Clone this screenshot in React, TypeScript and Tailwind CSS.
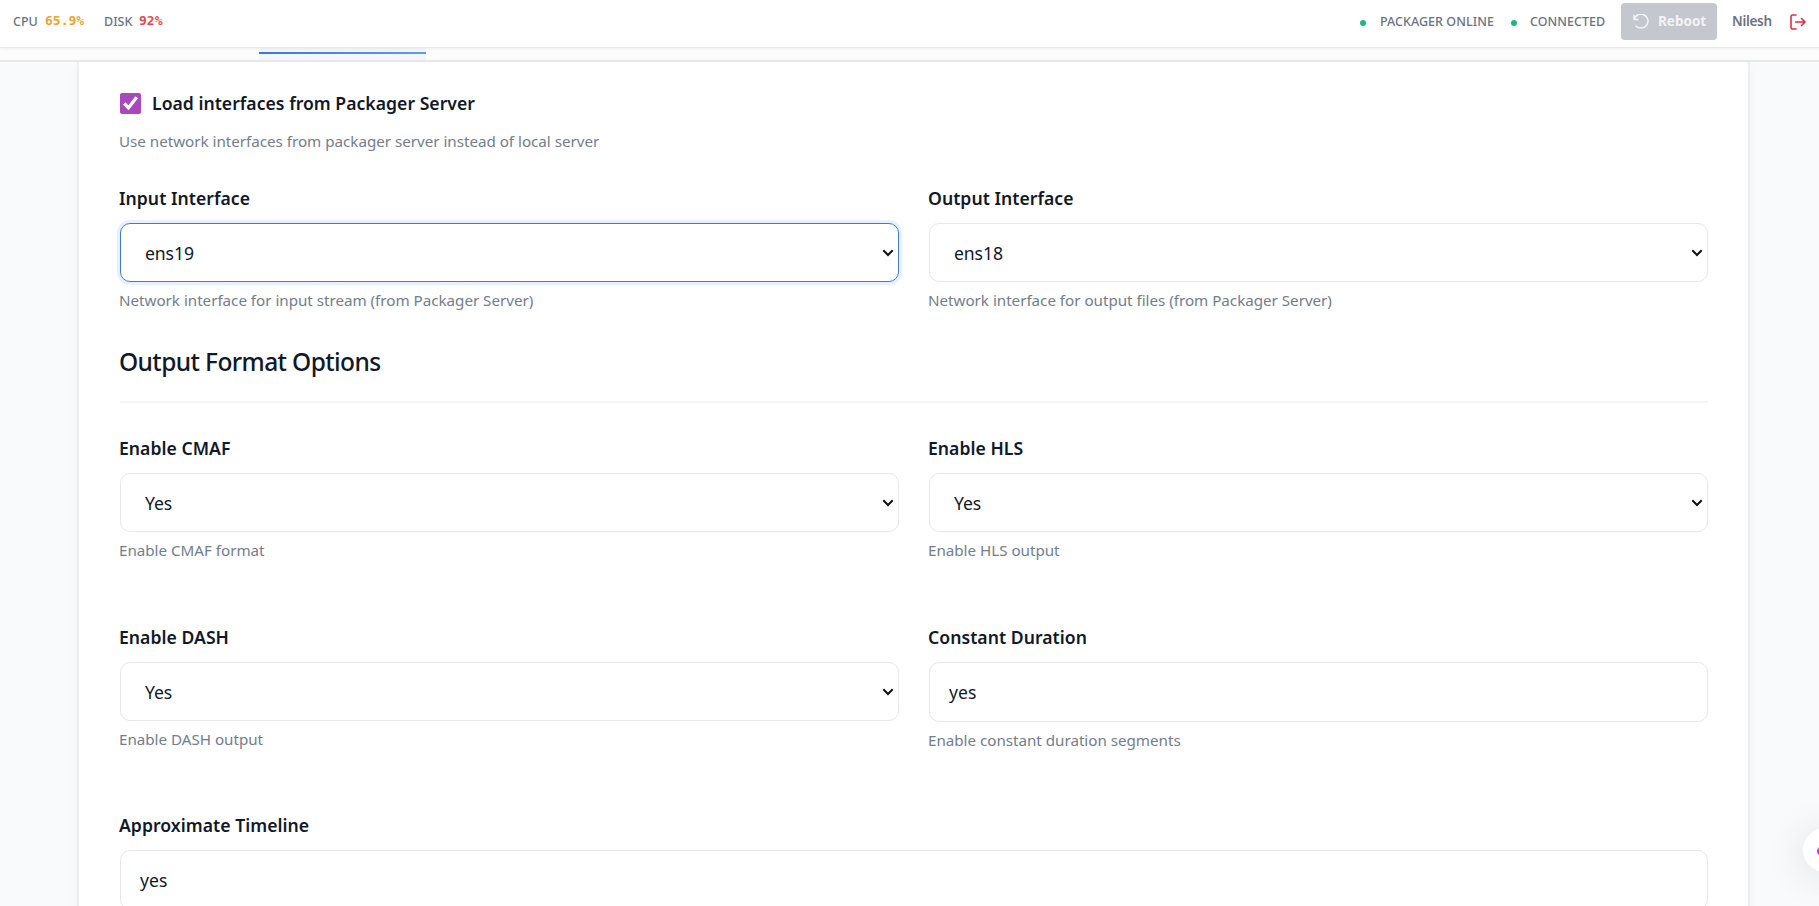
import { ReactNode } from 'react'

type FieldProps = {
  label: string
  help?: string
  children: ReactNode
}

function Field({ label, help, children }: FieldProps) {
  return (
    <div className="flex flex-col">
      <label className="-ml-px mb-[13px] self-start whitespace-nowrap text-[17.6px] font-semibold leading-6 tracking-[0.04px] text-[#111827]">
        {label}
      </label>
      {children}
      {help && <Help className="mt-[7px]">{help}</Help>}
    </div>
  )
}

function Help({ className = '', children }: { className?: string; children: ReactNode }) {
  return (
    <p className={`${className} -ml-px self-start whitespace-nowrap text-[15.2px] leading-[22px] tracking-[-0.02px] text-[#737d8c]`}>
      {children}
    </p>
  )
}

function Select({ value, focused = false }: { value: string; focused?: boolean }) {
  return (
    <div className="relative">
      <select
        defaultValue={value}
        className={
          focused
            ? 'block h-[59px] w-full appearance-none rounded-[10px] border border-[#3b7dd0] bg-white px-6 pt-px text-[17.6px] tracking-[-0.1px] text-[#111827] shadow-[0_0_0_3px_rgba(59,130,246,0.12)] outline-none'
            : 'block h-[59px] w-full appearance-none rounded-[10px] border border-[#e5e7eb] bg-white px-6 pt-px text-[17.6px] tracking-[-0.1px] text-[#111827] outline-none'
        }
      >
        <option>{value}</option>
      </select>
      <svg className="pointer-events-none absolute right-[5px] top-[26px]" width="12" height="8" viewBox="0 0 12 8">
        <path d="M1.3 1.3 6 6l4.7-4.7" fill="none" stroke="#111" strokeWidth="2" />
      </svg>
    </div>
  )
}

function TextInput({ value }: { value: string }) {
  return (
    <input
      type="text"
      defaultValue={value}
      className="block h-[60px] w-full rounded-[10px] border border-[#e5e7eb] bg-white px-[19px] text-[17.6px] text-[#111827] outline-none"
    />
  )
}

function Header() {
  return (
    <header className="relative flex h-12 shrink-0 items-start justify-between border-b border-[#e5e7eb] bg-white pl-[13px] pr-[13px] shadow-[0_1px_3px_rgba(0,0,0,0.06)]">
      <div className="mt-[13px] flex h-[18px] items-center text-[12.5px] font-medium leading-[18px] text-[#6b7280]">
        <span className="w-8">CPU</span>
        <span className="-mt-0.5 w-[59px] font-['DejaVu_Sans_Mono',monospace] text-[13px] font-bold text-[#eba42c]">65.9%</span>
        <span className="w-[35px]">DISK</span>
        <span className="-mt-0.5 font-['DejaVu_Sans_Mono',monospace] text-[13px] font-bold text-[#e5484d]">92%</span>
      </div>
      <div className="mt-[3px] flex h-[37px] items-center text-[12.5px] font-medium text-[#6b7280]">
        <span className="mr-[14px] mt-0.5 size-1.5 rounded-full bg-[#1fb583]" />
        <span className="w-[131px] whitespace-nowrap pt-px tracking-[0.05px]">PACKAGER ONLINE</span>
        <span className="mr-[13px] mt-0.5 size-1.5 rounded-full bg-[#1fb583]" />
        <span className="w-[91px] whitespace-nowrap pt-px tracking-[0.02px]">CONNECTED</span>
        <button type="button" className="mr-[15px] flex h-[37px] w-24 items-center gap-2 rounded bg-[#c4c7ce] pl-3 text-[13.5px] font-bold text-[#f3f4f6]">
          <svg width="17" height="16" viewBox="0 0 17 16" fill="none" stroke="currentColor" strokeWidth="1.5" strokeLinecap="round" strokeLinejoin="round">
            <path d="M1 1.500v4h4M1.200 5.300A7 7 0 1 1 3 12" />
          </svg>
          Reboot
        </button>
        <span className="w-[58px] text-[13.5px] font-semibold tracking-[-0.3px]">Nilesh</span>
        <svg width="16" height="16" viewBox="0 0 16 16" fill="none" stroke="#dc2f3c" strokeWidth="1.6" strokeLinecap="round" strokeLinejoin="round">
          <path d="M6 1H2.500A1.500 1.500 0 0 0 1 2.500v11A1.500 1.500 0 0 0 2.500 15H6M5.500 8H15M11.500 4.500 15 8l-3.500 3.500" />
        </svg>
      </div>
    </header>
  )
}

function TabStrip() {
  return (
    <nav className="h-[14px] shrink-0 border-b-2 border-[#e5e7eb] bg-[#fcfcfd] pl-[259px]">
      <div className="h-3 w-[167px] bg-[#f3f7fc] pt-1">
        <div className="h-0.5 bg-linear-to-r from-[#3b78d8] to-[#5f9bf2]" />
      </div>
    </nav>
  )
}

export default function App() {
  return (
    <div className="relative flex h-[906px] w-full flex-col overflow-hidden bg-[#f9fafb] font-['Noto_Sans','Open_Sans',sans-serif]">
      <Header />
      <TabStrip />
      <main className="mr-[69px] ml-[77px] min-h-0 flex-1 overflow-hidden border-x-2 border-[#eceef0] bg-white pl-[41px] pr-[40px] pt-[29px] shadow-[0_8px_10px_rgba(0,0,0,0.04)]">
        <div className="flex h-6 items-center gap-[11px]">
          <input type="checkbox" defaultChecked className="size-[21px] accent-[#ab47bc]" />
          <span className="whitespace-nowrap text-[17.6px] font-semibold leading-6 tracking-[0.02px] text-[#111827]">
            Load interfaces from Packager Server
          </span>
        </div>
        <Help className="mt-[15px]">Use network interfaces from packager server instead of local server</Help>

        <section className="mt-[34px] grid grid-cols-2 gap-x-[30px]">
          <Field label="Input Interface" help="Network interface for input stream (from Packager Server)">
            <Select value="ens19" focused />
          </Field>
          <Field label="Output Interface" help="Network interface for output files (from Packager Server)">
            <Select value="ens18" />
          </Field>
        </section>

        <h2 className="mt-[35px] border-b-2 border-[#f3f4f6] pb-[23px] -indent-px text-[24.5px] font-medium leading-8 tracking-[-0.6px] text-[#111827]">
          Output Format Options
        </h2>

        <section className="mt-[33px] grid grid-cols-2 gap-x-[30px]">
          <Field label="Enable CMAF" help="Enable CMAF format">
            <Select value="Yes" />
          </Field>
          <Field label="Enable HLS" help="Enable HLS output">
            <Select value="Yes" />
          </Field>
        </section>
        <section className="mt-16 grid grid-cols-2 gap-x-[30px]">
          <Field label="Enable DASH" help="Enable DASH output">
            <Select value="Yes" />
          </Field>
          <Field label="Constant Duration" help="Enable constant duration segments">
            <TextInput value="yes" />
          </Field>
        </section>
        <section className="mt-[62px]">
          <Field label="Approximate Timeline">
            <TextInput value="yes" />
          </Field>
        </section>
      </main>

      {/* floating assistant button, mostly off the right edge */}
      <div className="absolute left-[1803px] top-[828px] size-11 rounded-full bg-white pl-[14px] pt-[18px] shadow-[0_4px_40px_rgba(0,0,0,0.12)]">
        <div className="size-2.5 rounded-full bg-linear-to-b from-[#f0b060] from-10% to-[#c030d0] to-40%" />
      </div>
    </div>
  )
}
